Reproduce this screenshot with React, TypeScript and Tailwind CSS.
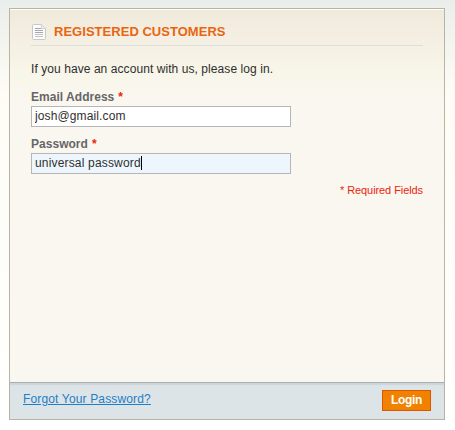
import type { ReactNode } from "react";

const PageIcon = () => (
	<svg className="mt-[14px] ml-px h-4 w-[14px] shrink-0" viewBox="0 0 14 16" fill="none">
		<path d="M1.5.5h8l4 4v10q0 1-1 1h-11q-1 0-1-1v-13q0-1 1-1z" fill="#fbfbfa" stroke="#c6c8c9" />
		<path d="M9.5.5v4h4z" fill="#eceeef" stroke="#d3d6d7" />
		<path d="M3 4.5h6M3 6.5h8M3 8.5h8" stroke="#a5a7a8" />
		<path d="M3 10.5h8M3 12.5h8" stroke="#c3c4c4" />
	</svg>
);

const Label = ({ htmlFor, children }: { htmlFor: string; children: ReactNode }) => (
	<label htmlFor={htmlFor} className="flex h-[15px] text-[12px] leading-[17px] font-bold tracking-[0.03px] whitespace-nowrap text-[#666666]">
		{children} <em className="ml-1 text-[#eb240a] not-italic">*</em>
	</label>
);

export default function App() {
	return (
		<div className="h-[430px] w-[455px] bg-linear-to-b from-[#eaeeeb] via-[#fffcf5] via-[22%] to-white pt-2 pl-[9px] font-['Liberation_Sans',Arial,sans-serif] text-[12px] text-[#2f2f2f]">
			<div className="flex h-[412px] w-[436px] flex-col border border-[#b8b4a2]">
				<div className="flex-1 border-t border-white bg-linear-to-b from-[#f0eadc] via-[#f8f5e9] via-[62px] to-[#faf7f0] to-[90px] pr-[21px] pl-[21px]">
					<div className="flex h-9 border-b border-[#dddddb]">
						<PageIcon />
						<h2 className="mt-[14px] ml-[8px] text-[13px] leading-4 font-bold tracking-[0.03px] whitespace-nowrap text-[#e96510]">REGISTERED CUSTOMERS</h2>
					</div>
					<p className="mt-[15px] h-4 leading-4 tracking-[0.07px] whitespace-nowrap">If you have an account with us, please log in.</p>
					<div className="mt-3">
						<Label htmlFor="email">Email Address</Label>
						<input id="email" defaultValue="josh@gmail.com" className="mt-[2px] block h-[21px] w-[260px] border border-[#b6b6b6] bg-white px-[3px] pb-[2px] text-[12px] tracking-[0.12px] outline-none" />
					</div>
					<div className="mt-[9px]">
						<Label htmlFor="password">Password</Label>
						<div className="mt-[2px] flex h-[21px] w-[260px] items-center border border-[#b6b6b6] bg-[#edf6fd] px-[3px] pb-[2px]">
							<span id="password" className="tracking-[0.17px] whitespace-nowrap">universal password</span>
							<span className="h-[14px] w-px bg-black" />
						</div>
					</div>
					<p className="mt-[8px] text-right text-[11px] leading-4 tracking-[-0.08px] text-[#eb240a]">* Required Fields</p>
				</div>
				<div className="flex h-[37px] justify-between border-t border-[#a5b0b3] bg-[#dde4e7] pr-[13px] pl-[13px] shadow-[inset_0_2px_1px_#ccd6d9]">
					<a href="#" className="mt-2 h-4 leading-4 tracking-[0.15px] whitespace-nowrap text-[#1e7ec8] underline">Forgot Your Password?</a>
					<button className="mt-[7px] h-[21px] w-[49px] border border-[#de5400] bg-[#f18200] pb-[2px] text-[12px] leading-4 font-bold tracking-[-0.3px] text-white">Login</button>
				</div>
			</div>
		</div>
	);
}
